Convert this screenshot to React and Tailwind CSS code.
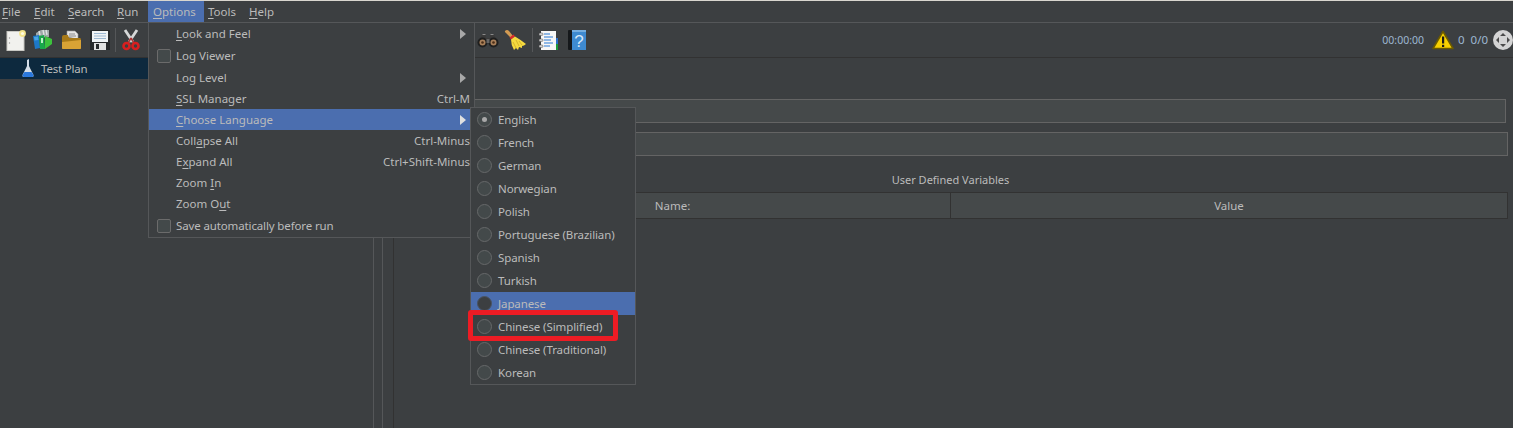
import React from "react";

const menuBar = [
  { label: "File", w: "w-[34px]", pl: "pl-[2px]" },
  { label: "Edit", w: "w-[34px]", pl: "pl-0" },
  { label: "Search", w: "w-[49px]", pl: "pl-0" },
  { label: "Run", w: "w-[31px]", pl: "pl-0" },
  { label: "Options", w: "w-[56px]", pl: "pl-[5px]", active: true },
  { label: "Tools", w: "w-[45px]", pl: "pl-[4px]" },
  { label: "Help", w: "w-[40px]", pl: "pl-0" },
];

const optionItems = [
  { label: "Look and Feel", u: 0, h: "h-[22px]", arrow: true },
  { label: "Log Viewer", h: "h-[22px]", check: true },
  { label: "Log Level", h: "h-[21px]", arrow: true },
  { label: "SSL Manager", u: 0, h: "h-[21px]", keys: "Ctrl-M" },
  { label: "Choose Language", u: 0, h: "h-[21px]", arrow: true, active: true },
  { label: "Collapse All", u: 4, h: "h-[21px]", keys: "Ctrl-Minus" },
  { label: "Expand All", u: 1, h: "h-[21px]", keys: "Ctrl+Shift-Minus" },
  { label: "Zoom In", u: 5, h: "h-[21px]" },
  { label: "Zoom Out", u: 6, h: "h-[21px]" },
  { label: "Save automatically before run", h: "h-[23px] tracking-[-0.13px]", check: true },
];

const languages = [
  "English",
  "French",
  "German",
  "Norwegian",
  "Polish",
  "Portuguese (Brazilian)",
  "Spanish",
  "Turkish",
  "Japanese",
  "Chinese (Simplified)",
  "Chinese (Traditional)",
  "Korean",
];

// first letter of a mnemonic gets underlined, like swing does
const Mnemonic = ({ text, u }) => {
  if (u === undefined) return <span>{text}</span>;
  return (
    <span>
      {text.slice(0, u)}
      <span className="underline underline-offset-2">{text[u]}</span>
      {text.slice(u + 1)}
    </span>
  );
};

const NewIcon = () => (
  <svg width="20" height="21" viewBox="0 0 20 21">
    <rect x="1" y="1.5" width="17" height="19" fill="#f1f1ee" stroke="#c9c9c4" />
    <circle cx="3.5" cy="8" r="0.7" fill="#999" />
    <circle cx="3.5" cy="13" r="0.7" fill="#999" />
    <circle cx="16.5" cy="3.5" r="3.4" fill="#f4e58c" />
    <circle cx="16.5" cy="3.5" r="1.6" fill="#fffbe0" />
  </svg>
);

const TemplatesIcon = () => (
  <svg width="21" height="22" viewBox="0 0 21 22">
    <path d="M4 4 L9 1 L17 1 L17 8 L4 9 Z" fill="#9fa8a8" />
    <path d="M7 2 L8 6 M11 1 L12 6 M14 1 L15 6" stroke="#dfe3e3" strokeWidth="1.4" />
    <path d="M1 7 L7 6 L8 19 L3 20 Z" fill="#1d78c8" />
    <path d="M2 8 L6 7.5 L6.5 11 L2.5 11.5 Z" fill="#49a5e6" />
    <path d="M7 7 L12 6 L13 20 L8 20 Z" fill="#18a84a" />
    <rect x="9" y="9" width="2" height="5" fill="#bdf0c6" />
    <path d="M13 7 L20 10 L20 15 L13 20 Z" fill="#3cc23c" />
  </svg>
);

const OpenIcon = () => (
  <svg width="21" height="20" viewBox="0 0 21 20">
    <path d="M6 7 L6 1 L14 1 L17 4 L17 9 Z" fill="#e6e6e6" stroke="#9a9a9a" strokeWidth="0.6" />
    <path d="M8 4 H14 M8 6 H15" stroke="#8a8a8a" />
    <path d="M1 7 Q1 5 3 5 L7 5 L8 8 L19 8 Q20 8 20 10 L20 18 Q20 19 19 19 L2 19 Q1 19 1 18 Z" fill="#a87a18" />
    <path d="M1 12 L20 10 L20 18 Q20 19 19 19 L2 19 Q1 19 1 18 Z" fill="#d9a335" />
  </svg>
);

const SaveIcon = () => (
  <svg width="20" height="20" viewBox="0 0 20 20">
    <path d="M0 1 Q0 0 1 0 L19 0 Q20 0 20 1 L20 20 L0 20 Z" fill="#26292c" />
    <rect x="2" y="1" width="16" height="11" fill="#eef2f5" />
    <path d="M4 3.5 H16 M4 6 H16 M4 8.5 H16" stroke="#9cb8d2" />
    <rect x="4" y="13" width="12" height="7" fill="#dfe0e1" />
    <rect x="6" y="14" width="3" height="5" fill="#26292c" />
  </svg>
);

const CutIcon = () => (
  <svg width="18" height="22" viewBox="0 0 18 22">
    <path d="M3 1 L11 13 M15 1 L7 13" stroke="#d6d8d8" strokeWidth="2.8" />
    <path d="M9 9 L12 14 M9 9 L6 14" stroke="#a33" strokeWidth="1.6" />
    <circle cx="4.5" cy="17" r="3" fill="none" stroke="#d81f1f" strokeWidth="2.6" />
    <circle cx="13.5" cy="17" r="3" fill="none" stroke="#d81f1f" strokeWidth="2.6" />
  </svg>
);

const BinocularsIcon = () => (
  <svg width="22" height="15" viewBox="0 0 22 15">
    <path d="M5 1 H9 V5 H13 V1 H17 L19 7 L3 7 Z" fill="#3a3a3a" />
    <path d="M5.5 1.5 H8.5 M13.5 1.5 H16.5" stroke="#8a8a8a" />
    <circle cx="5.5" cy="9.5" r="5" fill="#1f1f1f" />
    <circle cx="16.5" cy="9.5" r="5" fill="#1f1f1f" />
    <circle cx="5.5" cy="9.5" r="3" fill="#a9805a" />
    <circle cx="16.5" cy="9.5" r="3" fill="#a9805a" />
    <circle cx="5.5" cy="9.5" r="1.3" fill="#4a2d18" />
    <circle cx="16.5" cy="9.5" r="1.3" fill="#4a2d18" />
    <rect x="9.5" y="6" width="3" height="4" fill="#666" />
  </svg>
);

const BroomIcon = () => (
  <svg width="22" height="22" viewBox="0 0 22 22">
    <path d="M1 2 Q3 0 5 2 L9 7 L7 9 L2 4 Q0.5 3 1 2 Z" fill="#d29a52" />
    <path d="M5.5 8.5 L9.5 5.5 L11 7.5 L7 10.5 Z" fill="#d92b2b" />
    <path d="M7 10.5 L11 7.5 Q17 11 22 15 Q20 17 18 17 L18 19 L15 18 L14 21 L12 19 L10 21 Q7 16 7 10.5 Z" fill="#f5da3f" />
    <path d="M9 13 L12 19 M12 11 L15 17 M15 12 L18 16" stroke="#c9a51f" strokeWidth="0.7" />
  </svg>
);

const ListIcon = () => (
  <svg width="21" height="21" viewBox="0 0 21 21">
    <rect x="17" y="8" width="3" height="6" fill="#2b6fc9" />
    <rect x="17" y="14" width="3" height="6" fill="#1c9a3c" />
    <rect x="3" y="1" width="15" height="19" fill="#f7f7f7" />
    <path d="M6 4 H12 M6 7 H15 M6 10 H13 M6 13 H15 M6 16 H12" stroke="#2a7ad6" strokeWidth="1.2" />
    <rect x="1" y="3" width="4" height="2.4" rx="1" fill="#d8d8d8" stroke="#444" strokeWidth="0.5" />
    <rect x="1" y="9" width="4" height="2.4" rx="1" fill="#d8d8d8" stroke="#444" strokeWidth="0.5" />
    <rect x="1" y="15" width="4" height="2.4" rx="1" fill="#d8d8d8" stroke="#444" strokeWidth="0.5" />
  </svg>
);

const HelpIcon = () => (
  <svg width="18" height="22" viewBox="0 0 18 22">
    <rect x="0" y="1" width="4" height="20" rx="1" fill="#15181b" />
    <rect x="4" y="1" width="14" height="20" fill="#3e8ad0" />
    <rect x="4" y="1" width="14" height="2" fill="#76aee0" />
    <text x="11" y="17.5" textAnchor="middle" fontSize="17" fill="#d6e8f8" fontFamily="Liberation Sans, sans-serif">
      ?
    </text>
  </svg>
);

const WarningIcon = () => (
  <svg width="22" height="20" viewBox="0 0 22 20">
    <path d="M11 1.5 L21 18.5 L1 18.5 Z" fill="#f7d000" stroke="#6b5a00" strokeWidth="1.6" strokeLinejoin="round" />
    <rect x="10" y="6.5" width="2.2" height="7" fill="#1a1a1a" />
    <rect x="10" y="14.8" width="2.2" height="2.2" fill="#1a1a1a" />
  </svg>
);

const ArrowsCircleIcon = () => (
  <svg width="20" height="20" viewBox="0 0 20 20">
    <circle cx="10" cy="10" r="10" fill="#d4d4d4" />
    <path d="M10 3 L13 6 H7 Z M10 17 L13 14 H7 Z M3 10 L6 7 V13 Z M17 10 L14 7 V13 Z" fill="#4a4a4a" />
  </svg>
);

const FlaskIcon = () => (
  <svg width="12" height="19" viewBox="0 0 12 19">
    <path d="M5 1 L7 0 L7 7 L11.5 16 Q12 18 10 18 L2 18 Q0 18 0.5 16 L5 7 Z" fill="#d5dee8" />
    <path d="M2.5 13 L9.5 13 L11.5 16 Q12 18 10 18 L2 18 Q0 18 0.5 16 Z" fill="#2a78dc" />
  </svg>
);

const SubArrow = ({ active }) => (
  <svg width="7" height="10" viewBox="0 0 7 10" className="absolute right-[7px] top-1/2 -translate-y-1/2">
    <path d="M0 0 L6 5 L0 10 Z" fill={active ? "#e0e0e0" : "#a8a8a8"} />
  </svg>
);

const OptionsMenu = () => (
  <div className="absolute left-[148px] top-[22px] w-[327px] h-[216px] bg-[#3c3f41] border border-[#555759]">
    {optionItems.map((item) => (
      <div
        key={item.label}
        className={`relative flex items-center ${item.h} pl-[27px] pr-[4px] ${item.active ? "bg-[#4b6eaf]" : ""}`}
      >
        {item.check && (
          <span className="absolute left-[8px] top-1/2 -translate-y-1/2 w-[14px] h-[14px] rounded-[2px] border border-[#6b6b6b] bg-[#43494a]" />
        )}
        <Mnemonic text={item.label} u={item.u} />
        {item.keys && <span className="ml-auto">{item.keys}</span>}
        {item.arrow && <SubArrow active={item.active} />}
      </div>
    ))}
  </div>
);

const LanguageMenu = () => (
  <div className="absolute left-[470px] top-[107px] w-[166px] h-[278px] bg-[#3c3f41] border border-[#555759] tracking-[-0.1px]">
    {languages.map((lang, i) => (
      <div
        key={lang}
        className={`flex items-center h-[23px] pl-[6px] gap-[6px] ${lang === "Japanese" ? "bg-[#4b6eaf]" : ""}`}
      >
        <span
          className={`flex items-center justify-center w-[15px] h-[15px] rounded-full border ${
            lang === "Japanese" ? "border-[#4a5361] bg-[#3c3f41]" : "border-[#666869] bg-[#43494a]"
          }`}
        >
          {i === 0 && <span className="w-[5px] h-[5px] rounded-full bg-[#a8a8a8]" />}
        </span>
        <span>{lang}</span>
      </div>
    ))}
  </div>
);

export default function App() {
  return (
    <div
      className="relative w-[1513px] h-[428px] overflow-hidden flex flex-col bg-[#3c3f41] text-[#bbbbbb] text-[11.5px] leading-[16px]"
      style={{ fontFamily: '"Noto Sans", "Open Sans", sans-serif' }}
    >
      <div className="h-px bg-[#d9d6cf]" />

      {/* menu bar */}
      <div className="flex items-center h-[22px] border-b border-[#555759] shrink-0 text-[#bbbbbb]">
        {menuBar.map((m) => (
          <div
            key={m.label}
            className={`flex items-center h-full pt-px ${m.w} ${m.pl} ${m.active ? "bg-[#4b6eaf]" : ""}`}
          >
            <Mnemonic text={m.label} u={0} />
          </div>
        ))}
      </div>

      {/* toolbar */}
      <div className="flex items-center h-[35px] border-b border-[#323232] shrink-0 pl-[6px]">
        <NewIcon />
        <div className="ml-[6px]"><TemplatesIcon /></div>
        <div className="ml-[8px]"><OpenIcon /></div>
        <div className="ml-[8px]"><SaveIcon /></div>
        <div className="ml-[5px] w-px h-[24px] bg-[#555759]" />
        <div className="ml-[6px]"><CutIcon /></div>
        <div className="ml-[337px]"><BinocularsIcon /></div>
        <div className="ml-[5px]"><BroomIcon /></div>
        <div className="ml-[6px] w-px h-[24px] bg-[#555759]" />
        <div className="ml-[5px]"><ListIcon /></div>
        <div className="ml-[9px]"><HelpIcon /></div>
        <div className="ml-auto flex items-center text-[#9db7d2]">
          <span className="text-[10.5px]">00:00:00</span>
          <div className="ml-[8px]"><WarningIcon /></div>
          <span className="ml-[4px]">0</span>
          <span className="ml-[6px]">0/0</span>
          <div className="ml-[5px]"><ArrowsCircleIcon /></div>
        </div>
      </div>

      {/* tree + editor */}
      <div className="flex flex-1 min-h-0">
        <div className="w-[374px] shrink-0 border-r border-[#555759]">
          <div className="flex items-center h-[21px] bg-[#0d293e] pl-[22px] gap-[7px]">
            <FlaskIcon />
            <span className="tracking-[-0.2px]">Test Plan</span>
          </div>
        </div>
        <div className="w-[9px] shrink-0 border-r border-[#555759]" />
        <div className="flex-1 min-w-0 pl-[10px]">
          <div className="h-full border-l border-[#323232] pt-[41px]">
            <div className="h-[24px] mr-[7px] bg-[#45494a] border border-[#646464]" />
            <div className="h-[24px] mt-[9px] mr-[5px] bg-[#45494a] border border-[#646464]" />
            <div className="h-[36px] pt-[16px] text-center mr-[6px] text-[11px]">User Defined Variables</div>
            <div className="flex h-[27px] mr-[5px] pt-px bg-[#45494a] border border-[#323232]">
              <div className="w-[556px] flex items-center justify-center border-r border-[#323232] -mt-px">Name:</div>
              <div className="flex-1 flex items-center justify-center">Value</div>
            </div>
          </div>
        </div>
      </div>

      <OptionsMenu />
      <LanguageMenu />

      {/* red annotation box */}
      <div className="absolute left-[468px] top-[310px] w-[150px] h-[31px] border-[5px] border-[#ed1c24] rounded-[3px]" />
    </div>
  );
}
